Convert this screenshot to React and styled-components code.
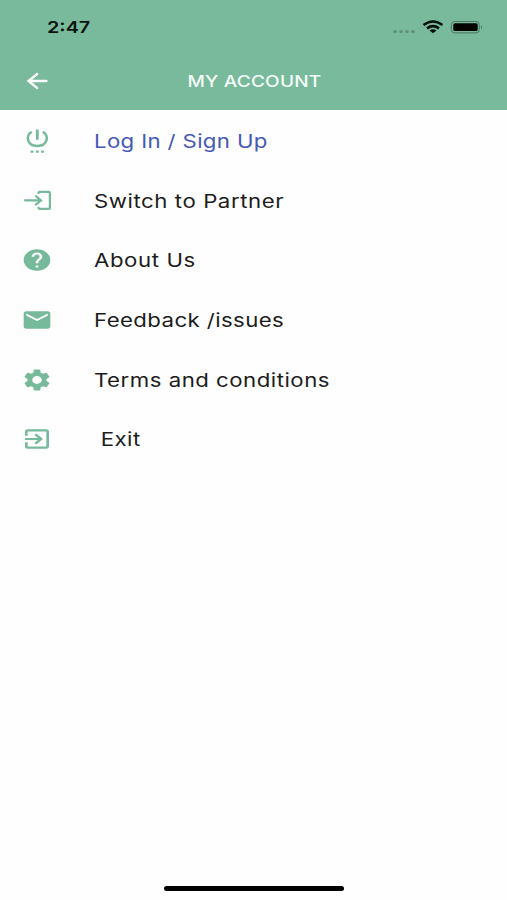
import React from 'react';
import styled, { createGlobalStyle } from 'styled-components';
import { MdHelp, MdEmail, MdSettings, MdExitToApp } from 'react-icons/md';

const GlobalStyle = createGlobalStyle`
  * { box-sizing: border-box; }
  body { margin: 0; background: #fff; }
`;

const Screen = styled.div`
  width: 507px;
  height: 900px;
  display: flex;
  flex-direction: column;
  overflow: hidden;
  background: #fefefe;
  font-family: Inter, "Liberation Sans", sans-serif;
`;

const Header = styled.header`
  height: 110px;
  flex: none;
  background: #79b99c;
  display: flex;
  flex-direction: column;
`;

const StatusBar = styled.div`
  height: 54px;
  padding: 0 23px 0 47px;
  display: flex;
  align-items: center;
  justify-content: space-between;
`;

const WideText = styled.span`
  display: block;
  white-space: pre;
  transform: scaleX(${(p) => p.$stretch || 1.2});
  transform-origin: ${(p) => p.$origin || 'left'} center;
`;

const Time = styled(WideText)`
  color: #07150f;
  font-size: 16.5px;
  font-weight: 600;
  line-height: 20px;
`;

const StatusIcons = styled.div`
  display: flex;
  align-items: center;
`;

const TitleBar = styled.div`
  height: 54px;
  display: grid;
  grid-template-columns: 74px 1fr 73px;
  align-items: center;
  justify-items: center;
`;

const BackButton = styled.button`
  padding: 0;
  border: 0;
  background: none;
  display: flex;
`;

const Title = styled(WideText)`
  color: #f4fff9;
  font-size: 15.5px;
  font-weight: 500;
  line-height: 20px;
  letter-spacing: 0.15px;
  padding-top: 1px;
`;

const Menu = styled.nav`
  flex: 1;
  padding-top: 1px;
  display: flex;
  flex-direction: column;
`;

const MenuItem = styled.a`
  height: 59.7px;
  flex: none;
  display: grid;
  grid-template-columns: 74px 1fr;
  column-gap: 20px;
  align-items: center;
  color: ${(p) => (p.$active ? '#4658b4' : '#1c1c1c')};
`;

const IconSlot = styled.span`
  display: flex;
  justify-content: center;
  color: #77b99b;
  svg { width: 32px; height: 26px; }
`;

const Label = styled(WideText)`
  font-size: 18.5px;
  line-height: 24px;
  letter-spacing: ${(p) => p.$spacing ?? 0.38}px;
`;

const HomeIndicator = styled.div`
  align-self: center;
  width: 180px;
  height: 5px;
  margin-bottom: 9px;
  border-radius: 3px;
  background: #000;
`;

const PowerIcon = () => (
  <svg viewBox="0 0 32 26" fill="none" stroke="currentColor" strokeWidth="2.5">
    <path d="M16.3 1.5V11.8" strokeWidth="2.8" />
    <path d="M10.8 3.8C4.1 7.3 5.8 18 16.3 18S28.5 7.3 21.8 3.8" />
    <path d="M9.6 23.7H12.4M14.9 23.7H17.7M20.2 23.7H23" strokeWidth="2.2" />
  </svg>
);

const LoginIcon = () => (
  <svg viewBox="0 0 32 26" fill="none" stroke="currentColor" strokeWidth="2.2">
    <path d="M17.5 6V5Q17.5 3.9 18.8 3.9H27.8Q28.9 3.9 28.9 4.9V19.9Q28.9 20.9 27.8 20.9H18.8Q17.5 20.9 17.5 19.8V18.8" />
    <path d="M3.2 12.4H19.5M14.3 7.7L20 12.4L14.3 17.1" />
  </svg>
);

const ITEMS = [
  { label: 'Log In / Sign Up', Icon: PowerIcon, active: true, spacing: 0.3 },
  { label: 'Switch to Partner', Icon: LoginIcon, spacing: 0.47 },
  { label: 'About Us', Icon: MdHelp, spacing: 0.5 },
  { label: 'Feedback /issues', Icon: MdEmail, spacing: 0.34 },
  { label: 'Terms and conditions', Icon: MdSettings, spacing: 0.42 },
  { label: ' Exit', Icon: MdExitToApp },
];

export default function App() {
  return (
    <Screen>
      <GlobalStyle />
      <Header>
        <StatusBar>
          <Time $stretch={1.2}>2:47</Time>
          <StatusIcons>
            <svg width="91" height="18" viewBox="393 18 91 18">
              <g fill="#5d917a">
                <ellipse cx="395" cy="31.5" rx="1.9" ry="1.5" />
                <ellipse cx="401" cy="31.5" rx="1.9" ry="1.5" />
                <ellipse cx="407" cy="31.5" rx="1.9" ry="1.5" />
                <ellipse cx="413" cy="31.5" rx="1.9" ry="1.5" />
              </g>
              <g fill="none" stroke="#03100a" strokeWidth="2.6">
                <path d="M423.5 25Q433 18 442.5 25" />
                <path d="M427 28.4Q433 24 439 28.4" />
              </g>
              <path d="M429.5 30.5Q433 28.2 436.5 30.5L433 33.2Z" fill="#03100a" />
              <rect x="451.3" y="21.5" width="28" height="11.4" rx="3.3" fill="none" stroke="#4b7662" />
              <rect x="453.3" y="23.3" width="24.4" height="7.8" rx="1.7" fill="#000" />
              <path d="M481 25.3Q483 27.2 481 29.2Z" fill="#4b7662" />
            </svg>
          </StatusIcons>
        </StatusBar>
        <TitleBar>
          <BackButton aria-label="Back">
            <svg width="22" height="18" viewBox="0 0 22 18" fill="none" stroke="#fff" strokeWidth="2.3" strokeLinecap="round">
              <path d="M20.5 9H3M11.2 2L2.5 9L11.2 16" />
            </svg>
          </BackButton>
          <Title $origin="center" $stretch={1.23}>MY ACCOUNT</Title>
        </TitleBar>
      </Header>
      <Menu>
        {ITEMS.map(({ label, Icon, active, spacing }) => (
          <MenuItem key={label} $active={active}>
            <IconSlot><Icon preserveAspectRatio="none" /></IconSlot>
            <Label $spacing={spacing}>{label}</Label>
          </MenuItem>
        ))}
      </Menu>
      <HomeIndicator />
    </Screen>
  );
}
